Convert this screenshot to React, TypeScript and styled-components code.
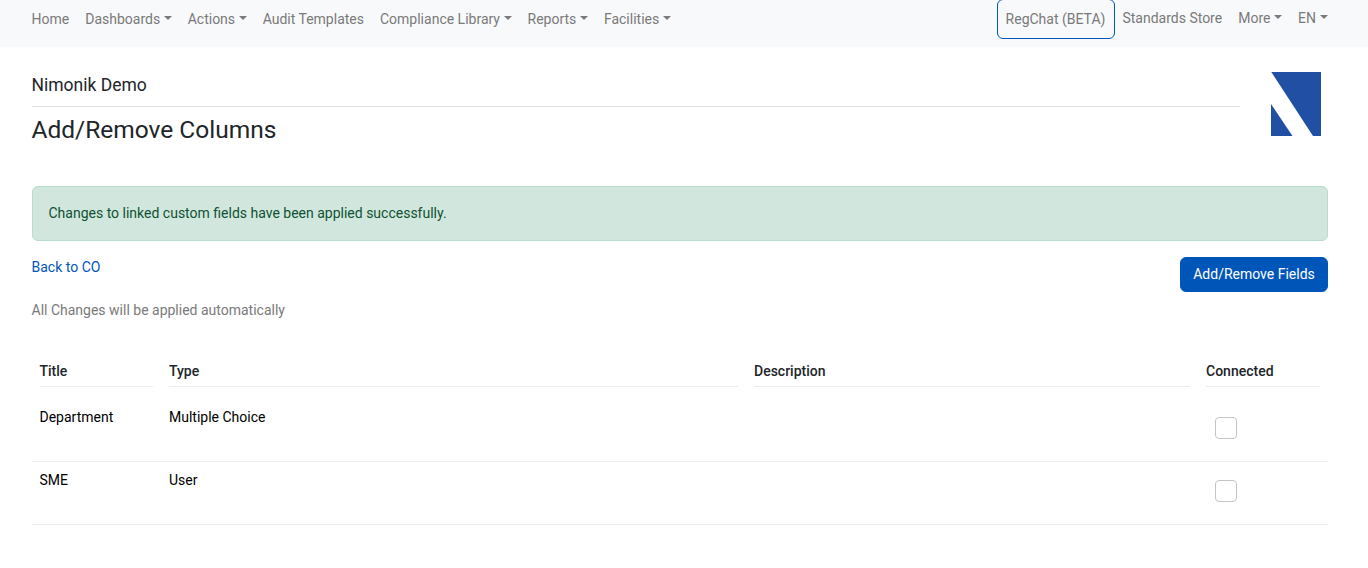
import React from 'react'
import styled, { createGlobalStyle } from 'styled-components'

const GlobalStyle = createGlobalStyle`
  html, body {
    margin: 0;
    padding: 0;
    background: #fff;
    font-family: Roboto, "Liberation Sans", sans-serif;
    font-size: 14px;
    line-height: 21px;
    color: #212529;
  }
  * {
    box-sizing: border-box;
  }
`

const leftLinks = [
  { label: 'Home' },
  { label: 'Dashboards', caret: true },
  { label: 'Actions', caret: true },
  { label: 'Audit Templates' },
  { label: 'Compliance Library', caret: true },
  { label: 'Reports', caret: true },
  { label: 'Facilities', caret: true },
]

const fields = [
  { title: 'Department', type: 'Multiple Choice' },
  { title: 'SME', type: 'User' },
]

const App: React.FC = () => {
  return (
    <>
      <GlobalStyle />
      <Navbar>
        <NavList>
          {leftLinks.map((link) => (
            <NavLink key={link.label} href='#'>
              {link.label}
              {link.caret && <Caret />}
            </NavLink>
          ))}
        </NavList>
        <RightNav>
          <ChatLink href='#'>RegChat (BETA)</ChatLink>
          <NavLink href='#'>Standards Store</NavLink>
          <NavLink href='#'>
            More
            <Caret />
          </NavLink>
          <NavLink href='#'>
            EN
            <Caret />
          </NavLink>
        </RightNav>
      </Navbar>

      <Page>
        <PageHeader>
          <HeaderText>
            <CompanyName>Nimonik Demo</CompanyName>
            <PageTitle>Add/Remove Columns</PageTitle>
          </HeaderText>
          <Logo viewBox='0 0 50 64' aria-label='Nimonik'>
            <polygon points='0.3,0 50,0 50,64 42,64' fill='#214fa3' />
            <polygon points='0,32 21.5,64 0,64' fill='#214fa3' />
          </Logo>
        </PageHeader>

        <Alert>Changes to linked custom fields have been applied successfully.</Alert>

        <ActionRow>
          <div>
            <BackLink href='#'>Back to CO</BackLink>
            <Hint>All Changes will be applied automatically</Hint>
          </div>
          <PrimaryButton>Add/Remove Fields</PrimaryButton>
        </ActionRow>

        <Table>
          <colgroup>
            <col width={129.5} />
            <col width={585} />
            <col width={452} />
            <col width={130} />
          </colgroup>
          <thead>
            <tr>
              <HeadCell><HeadLabel>Title</HeadLabel></HeadCell>
              <HeadCell><HeadLabel>Type</HeadLabel></HeadCell>
              <HeadCell><HeadLabel>Description</HeadLabel></HeadCell>
              <HeadCell><HeadLabel>Connected</HeadLabel></HeadCell>
            </tr>
          </thead>
          <tbody>
            {fields.map((field) => (
              <tr key={field.title}>
                <Cell>{field.title}</Cell>
                <Cell>{field.type}</Cell>
                <Cell />
                <Cell>
                  <Checkbox type='checkbox' aria-label={`${field.title} connected`} />
                </Cell>
              </tr>
            ))}
          </tbody>
        </Table>
      </Page>
    </>
  )
}

const Navbar = styled.nav`
  height: 47px;
  padding: 0 32.5px 0 23.5px;
  display: flex;
  justify-content: space-between;
  background-color: #f8f9fa;
`

const NavList = styled.div`
  display: flex;
  align-items: flex-start;
`

const RightNav = styled(NavList)`
  margin-top: -1px;
`

const NavLink = styled.a`
  display: block;
  padding: 9px 8px;
  color: #7a7a7a;
  text-decoration: none;
  white-space: nowrap;
`

const ChatLink = styled(NavLink)`
  height: 40px;
  margin-right: -0.5px;
  padding-right: 8.5px;
  border: 1px solid #0056b8;
  border-radius: 6px;
`

const Caret = styled.span`
  display: inline-block;
  margin-left: 3.57px;
  vertical-align: 3.57px;
  border-top: 4.2px solid;
  border-right: 4.2px solid transparent;
  border-left: 4.2px solid transparent;
`

const Page = styled.main`
  padding: 25px 40px 0 31.5px;
`

const PageHeader = styled.header`
  display: flex;
  align-items: flex-start;
  justify-content: space-between;
  height: 114px;
`

const HeaderText = styled.div`
  width: 1208.5px;
`

const CompanyName = styled.div`
  height: 35px;
  font-size: 17.5px;
  line-height: 26px;
  border-bottom: 1px solid #dfdfdf;
`

const PageTitle = styled.h1`
  margin: 5px 0 0;
  font-size: 24.5px;
  font-weight: 400;
  line-height: 36px;
`

const Logo = styled.svg`
  width: 50px;
  height: 64px;
  margin-right: 7px;
  flex-shrink: 0;
`

const Alert = styled.div`
  height: 55px;
  padding: 16px;
  color: #0f5132;
  background-color: #d1e7dd;
  border: 1px solid #badbcc;
  border-radius: 6px;
`

const ActionRow = styled.div`
  display: flex;
  justify-content: space-between;
  align-items: flex-start;
  margin-top: 16px;
  height: 80px;
`

const BackLink = styled.a`
  display: block;
  color: #0056b8;
  text-decoration: none;
`

const Hint = styled.div`
  margin-top: 22px;
  color: #7a7a7a;
`

const PrimaryButton = styled.button`
  width: 148px;
  height: 35px;
  padding: 0;
  color: #fff;
  font: inherit;
  background-color: #0056b8;
  border: 1px solid #0056b8;
  border-radius: 6px;
`

const Table = styled.table`
  width: 1296.5px;
  margin-top: 20px;
  table-layout: fixed;
  border-collapse: collapse;

  tbody tr:first-child td {
    height: 62px;
  }
`

const HeadCell = styled.th`
  padding: 0 8px 12px;
  font-weight: 500;
  text-align: left;
  vertical-align: bottom;
`

const HeadLabel = styled.div`
  height: 30px;
  padding-top: 4px;
  border-bottom: 1px solid #ececec;
`

const Cell = styled.td`
  height: 63px;
  padding: 8px;
  color: #000;
  vertical-align: top;
  border-bottom: 1px solid #ececec;
`

const Checkbox = styled.input`
  display: block;
  width: 22px;
  height: 22px;
  margin: 10px 0 0 9px;
  appearance: none;
  background: #fff;
  border: 1px solid #c4c4c4;
  border-radius: 4px;
`

export default App
